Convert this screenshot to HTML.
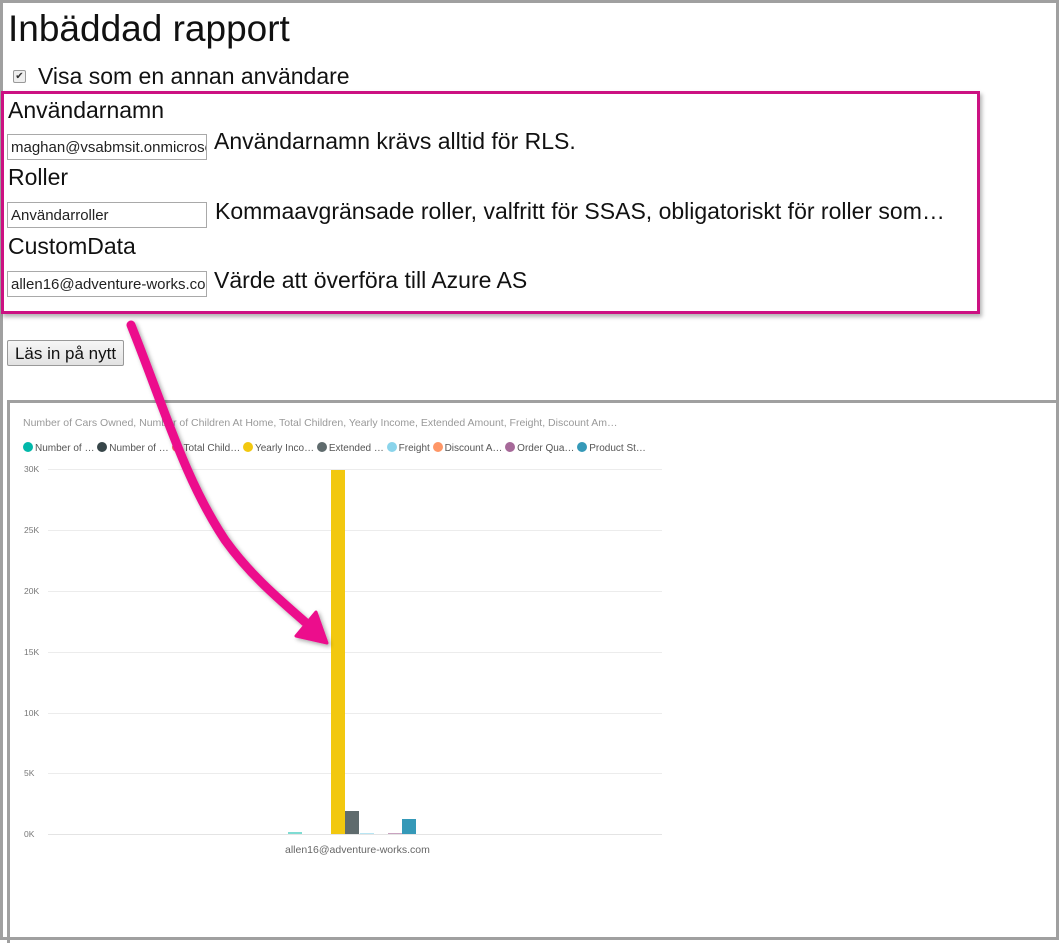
<!DOCTYPE html>
<html><head><meta charset="utf-8"><style>
body{margin:0;width:1060px;height:940px;position:relative;overflow:hidden;background:#fff;font-family:"Segoe UI","Liberation Sans",sans-serif;color:#111}
.frame{position:absolute;left:0;top:0;width:1053px;height:934px;border:3px solid #a0a0a0}
.t{position:absolute;white-space:nowrap}
.inp{position:absolute;left:7px;width:200px;height:26px;border:1px solid #a9a9a9;font-size:15px;line-height:25px;padding-left:3px;box-sizing:border-box;overflow:hidden;white-space:nowrap;color:#222}
.pink{position:absolute;left:1px;top:91px;width:973px;height:217px;border:3px solid #cc1182;box-shadow:2px 3px 4px rgba(0,0,0,.3)}
.rep{position:absolute;left:7px;top:400px;width:1046px;height:540px;border:3px solid #a0a0a0;border-right:none;border-bottom:none}
.sm{font-size:10.5px;color:#666}
.grid{position:absolute;left:48px;width:614px;height:1px;background:#ececec}
.yl{position:absolute;left:24px;font-size:8.5px;color:#777}
.dot{display:inline-block;width:10px;height:10px;border-radius:50%;vertical-align:-1px;margin-right:2px}
.big{font-size:23px}
</style></head><body>
<div class="frame"></div>
<div class="t" style="left:8px;top:8px;font-size:37px;color:#111">Inbäddad rapport</div>
<div style="position:absolute;left:13px;top:70px;width:11px;height:11px;border:1px solid #999;background:#eee;border-radius:2px;font-size:10px;line-height:11px;text-align:center;color:#333">✔</div>
<div class="t big" style="left:38px;top:63px">Visa som en annan användare</div>
<div class="pink"></div>
<div class="t big" style="left:8px;top:97px">Användarnamn</div>
<div class="inp" style="top:134px">maghan@vsabmsit.onmicrosoft.com</div>
<div class="t big" style="left:214px;top:128px">Användarnamn krävs alltid för RLS.</div>
<div class="t big" style="left:8px;top:164px">Roller</div>
<div class="inp" style="top:202px">Användarroller</div>
<div class="t big" style="left:215px;top:198px">Kommaavgränsade roller, valfritt för SSAS, obligatoriskt för roller som…</div>
<div class="t big" style="left:8px;top:233px">CustomData</div>
<div class="inp" style="top:271px">allen16@adventure-works.com</div>
<div class="t big" style="left:214px;top:267px">Värde att överföra till Azure AS</div>
<div style="position:absolute;left:7px;top:340px;width:117px;height:26px;border:1px solid #999;background:linear-gradient(#f6f6f6,#e2e2e2);font-size:17px;line-height:25px;text-align:center;box-sizing:border-box;border-radius:2px">Läs in på nytt</div>
<div class="rep"></div>
<div class="t sm" style="left:23px;top:417px;color:#999">Number of Cars Owned, Number of Children At Home, Total Children, Yearly Income, Extended Amount, Freight, Discount Am…</div>
<div class="t" style="left:23px;top:442px;font-size:10px;color:#555">
<span class="dot" style="background:#01b8aa"></span>Number of … <span class="dot" style="background:#374649"></span>Number of … <span class="dot" style="background:#fd625e"></span>Total Child… <span class="dot" style="background:#f2c80f"></span>Yearly Inco… <span class="dot" style="background:#5f6b6d"></span>Extended … <span class="dot" style="background:#8ad4eb"></span>Freight <span class="dot" style="background:#fe9666"></span>Discount A… <span class="dot" style="background:#a66999"></span>Order Qua… <span class="dot" style="background:#3599b8"></span>Product St…</div>
<div class="grid" style="top:469px"></div><div class="yl" style="top:464px">30K</div>
<div class="grid" style="top:530px"></div><div class="yl" style="top:525px">25K</div>
<div class="grid" style="top:591px"></div><div class="yl" style="top:586px">20K</div>
<div class="grid" style="top:652px"></div><div class="yl" style="top:647px">15K</div>
<div class="grid" style="top:713px"></div><div class="yl" style="top:708px">10K</div>
<div class="grid" style="top:773px"></div><div class="yl" style="top:768px">5K</div>
<div class="grid" style="top:834px;background:#e4e4e4"></div><div class="yl" style="top:829px">0K</div>
<div style="position:absolute;left:288px;top:832px;width:14px;height:2px;background:#7fdcd3"></div>
<div style="position:absolute;left:331px;top:470px;width:14px;height:364px;background:#f2c80f"></div>
<div style="position:absolute;left:345px;top:811px;width:14px;height:23px;background:#5f6b6d"></div>
<div style="position:absolute;left:360px;top:833px;width:14px;height:1px;background:#b8e5f3"></div>
<div style="position:absolute;left:388px;top:833px;width:14px;height:1px;background:#c9a3c0"></div>
<div style="position:absolute;left:402px;top:819px;width:14px;height:15px;background:#3599b8"></div>
<div class="t" style="left:285px;top:844px;font-size:10.5px;color:#666">allen16@adventure-works.com</div>
<svg style="position:absolute;left:0;top:0" width="1060" height="940">
<defs><filter id="s"><feDropShadow dx="2" dy="2" stdDeviation="2" flood-opacity=".35"/></filter></defs>
<g filter="url(#s)">
<path d="M131 325 C165 410 185 480 225 540 C250 575 280 600 305 622" fill="none" stroke="#ec0c8c" stroke-width="9" stroke-linecap="round"/>
<path d="M296 636 L327 643 L316 612 Z" fill="#ec0c8c" stroke="#ec0c8c" stroke-width="3" stroke-linejoin="round"/>
</g>
</svg>
</body></html>
